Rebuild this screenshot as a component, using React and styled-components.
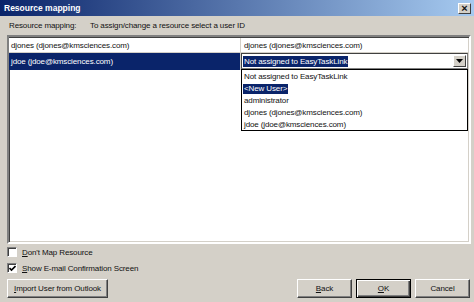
import React from "react";
import styled, { createGlobalStyle } from "styled-components";

const GlobalStyle = createGlobalStyle`
  html, body {
    margin: 0;
    padding: 0;
    background: #d4d0c8;
  }
  #root {
    width: 474px;
    height: 302px;
    overflow: hidden;
  }
`;

const rows = [
  { name: "djones (djones@kmsciences.com)", mapped: "djones (djones@kmsciences.com)" },
  { name: "jdoe (jdoe@kmsciences.com)", mapped: "Not assigned to EasyTaskLink", editing: true },
];

const options = [
  "Not assigned to EasyTaskLink",
  "<New User>",
  "administrator",
  "djones (djones@kmsciences.com)",
  "jdoe (jdoe@kmsciences.com)",
];

function App() {
  return (
    <>
      <GlobalStyle />
      <Window>
        <TitleBar>
          <Title>Resource mapping</Title>
          <CloseButton>×</CloseButton>
        </TitleBar>
        <Body>
          <HintRow>
            <HintLabel>Resource mapping:</HintLabel>
            <span>To assign/change a resource select a user ID</span>
          </HintRow>
          <Grid>
            {rows.map((row) => (
              <Row key={row.name} $tall={row.editing}>
                <NameCell $selected={row.editing}>{row.name}</NameCell>
                {row.editing ? (
                  <ComboCell>
                    <Combo>
                      <ComboText>{row.mapped}</ComboText>
                      <ComboArrow>
                        <svg width="7" height="4" viewBox="0 0 7 4">
                          <path d="M0 0h7L3.5 4z" fill="#000" />
                        </svg>
                      </ComboArrow>
                    </Combo>
                    <DropList>
                      {options.map((opt, i) => (
                        <DropItem key={opt}>
                          <ItemText $active={i === 1}>{opt}</ItemText>
                        </DropItem>
                      ))}
                    </DropList>
                  </ComboCell>
                ) : (
                  <MapCell>{row.mapped}</MapCell>
                )}
              </Row>
            ))}
          </Grid>
          <CheckRow>
            <CheckBox />
            <span><u>D</u>on't Map Resource</span>
          </CheckRow>
          <CheckRow>
            <CheckBox $checked>
              <svg width="7" height="7" viewBox="0 0 7 7">
                <path d="M0.5 3l2 2 4-4" stroke="#000" strokeWidth="1.6" fill="none" />
              </svg>
            </CheckBox>
            <span><u>S</u>how E-mail Confirmation Screen</span>
          </CheckRow>
          <ButtonRow>
            <Button $width={101}><u>I</u>mport User from Outlook</Button>
            <Spacer />
            <Button $width={55}><u>B</u>ack</Button>
            <Button $width={55} $default><u>O</u>K</Button>
            <Button $width={55}>Cancel</Button>
          </ButtonRow>
        </Body>
      </Window>
    </>
  );
}

const Window = styled.div`
  width: 474px;
  height: 302px;
  display: flex;
  flex-direction: column;
  background: #d4d0c8;
  font-family: "Liberation Sans", Arial, sans-serif;
  font-size: 8px;
  letter-spacing: -0.12px;
  color: #111;
  box-sizing: border-box;
`;

const TitleBar = styled.div`
  height: 16px;
  display: flex;
  align-items: center;
  justify-content: space-between;
  padding: 0 3px 0 4px;
  background: linear-gradient(to right, #0a246a, #a6caf0);
`;

const Title = styled.div`
  color: #fff;
  font-weight: bold;
  font-size: 8.5px;
  letter-spacing: 0;
`;

const CloseButton = styled.div`
  width: 13px;
  height: 11px;
  box-sizing: border-box;
  background: #d4d0c8;
  border: 1px solid;
  border-color: #fff #404040 #404040 #fff;
  display: flex;
  align-items: center;
  justify-content: center;
  font-weight: bold;
  font-size: 11px;
  line-height: 1;
`;

const Body = styled.div`
  flex: 1;
  display: flex;
  flex-direction: column;
  padding: 0 3px 0 7px;
`;

const HintRow = styled.div`
  height: 19px;
  display: flex;
  align-items: center;
  padding-left: 2px;
`;

const HintLabel = styled.span`
  width: 81px;
  flex: none;
`;

const Grid = styled.div`
  height: 209px;
  box-sizing: border-box;
  background: #fff;
  border: 2px solid;
  border-color: #808080 #fff #fff #808080;
  box-shadow: inset 1px 1px 0 #404040, inset -1px -1px 0 #d4d0c8;
  display: flex;
  flex-direction: column;
`;

const Row = styled.div`
  display: flex;
  height: ${(p) => (p.$tall ? 17 : 14)}px;
  border-bottom: ${(p) => (p.$tall ? "none" : "1px solid #d4d0c8")};
  margin-top: ${(p) => (p.$tall ? 0 : 1)}px;
`;

const NameCell = styled.div`
  width: 229px;
  display: flex;
  align-items: center;
  padding-left: 2px;
  background: ${(p) => (p.$selected ? "#0a246a" : "#fff")};
  color: ${(p) => (p.$selected ? "#fff" : "#111")};
  border-right: 1px solid #d4d0c8;
`;

const MapCell = styled.div`
  flex: 1;
  display: flex;
  align-items: center;
  padding-left: 3px;
`;

const ComboCell = styled.div`
  flex: 1;
  position: relative;
`;

const Combo = styled.div`
  height: 16px;
  box-sizing: border-box;
  margin-right: 1px;
  border: 1px solid;
  border-color: #404040 #808080 #808080 #404040;
  background: #fff;
  display: flex;
  align-items: center;
  padding: 0 1px;
`;

const ComboText = styled.span`
  color: #fff;
  background: #0a246a;
  padding: 1px;
  line-height: 9px;
`;

const ComboArrow = styled.div`
  margin-left: auto;
  width: 13px;
  height: 12px;
  box-sizing: border-box;
  background: #d4d0c8;
  border: 1px solid;
  border-color: #fff #404040 #404040 #fff;
  display: flex;
  align-items: center;
  justify-content: center;
`;

const DropList = styled.div`
  position: absolute;
  top: 16px;
  left: 0;
  right: 1px;
  height: 62px;
  box-sizing: border-box;
  background: #fff;
  border: 1px solid #000;
  padding-top: 1px;
`;

const DropItem = styled.div`
  height: 12px;
  display: flex;
  align-items: center;
  padding-left: 1px;
`;

const ItemText = styled.span`
  padding: 0 1px;
  line-height: 10px;
  background: ${(p) => (p.$active ? "#0a246a" : "transparent")};
  color: ${(p) => (p.$active ? "#fff" : "#111")};
`;

const CheckRow = styled.div`
  height: 16px;
  display: flex;
  align-items: center;
  gap: 5px;
`;

const CheckBox = styled.div`
  width: 10px;
  height: 10px;
  box-sizing: border-box;
  background: #fff;
  border: 1px solid;
  border-color: #808080 #fff #fff #808080;
  box-shadow: inset 1px 1px 0 #404040;
  display: flex;
  align-items: center;
  justify-content: center;
`;

const ButtonRow = styled.div`
  display: flex;
  gap: 4px;
  margin-top: 3px;
  padding-right: 1px;
`;

const Spacer = styled.div`
  flex: 1;
`;

const Button = styled.div`
  width: ${(p) => p.$width}px;
  height: 19px;
  box-sizing: border-box;
  background: #d4d0c8;
  border: 1px solid;
  border-color: ${(p) => (p.$default ? "#000" : "#fff #404040 #404040 #fff")};
  box-shadow: ${(p) =>
    p.$default
      ? "inset 1px 1px 0 #fff, inset -1px -1px 0 #404040, inset -2px -2px 0 #808080"
      : "inset -1px -1px 0 #808080"};
  display: flex;
  align-items: center;
  justify-content: center;
`;

export default App;
